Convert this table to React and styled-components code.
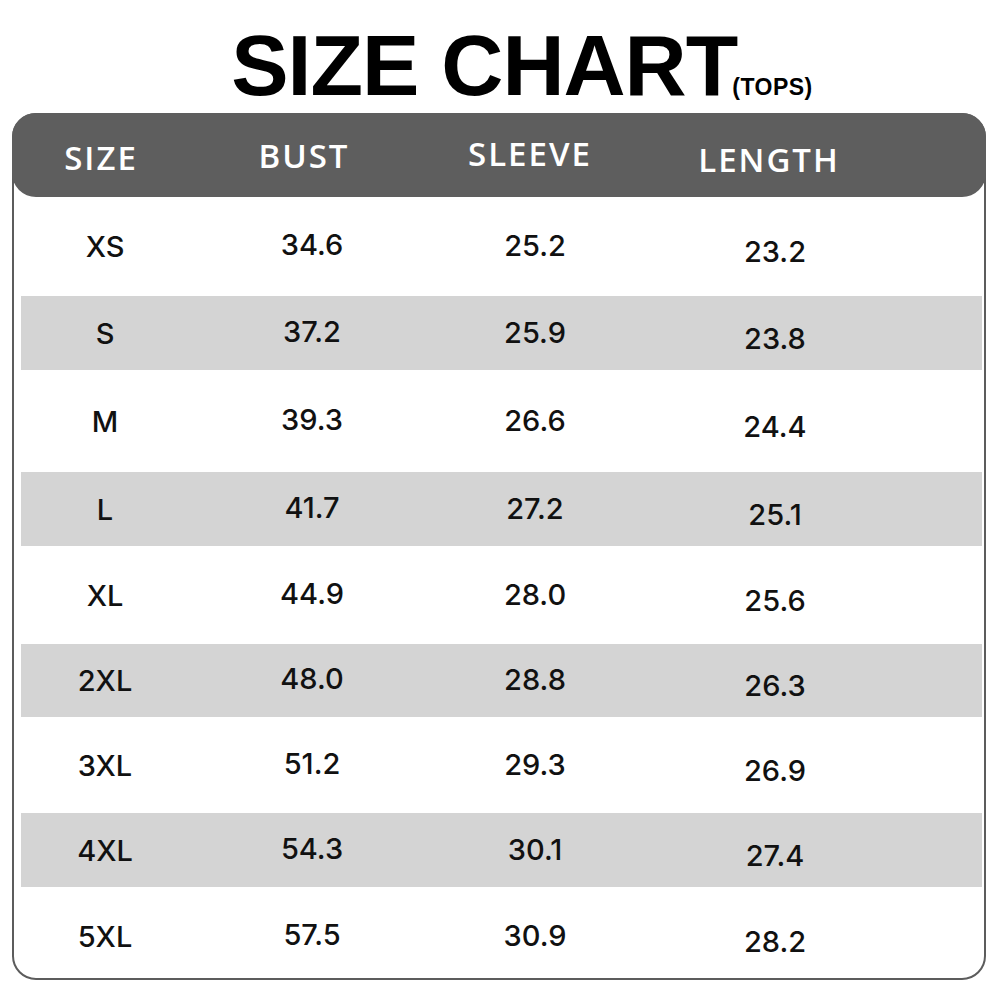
import React from "react";
import styled, { createGlobalStyle } from "styled-components";

const Global = createGlobalStyle`
  html, body { margin: 0; padding: 0; background: #ffffff; }
  body { width: 1000px; height: 1000px; overflow: hidden; }
  * { box-sizing: border-box; }
`;

const Page = styled.div`
  width: 1000px;
  height: 1000px;
  background: #ffffff;
  display: flex;
  flex-direction: column;
`;

const TitleBar = styled.div`
  height: 113px;
  padding: 22px 0 0 44px;
  display: flex;
  justify-content: center;
`;

const Title = styled.h1`
  margin: 0;
  font-family: "Liberation Sans", Arial, sans-serif;
  font-weight: 700;
  font-size: 86px;
  line-height: 86px;
  letter-spacing: -1px;
  color: #000000;
  white-space: nowrap;
`;

const Sub = styled.span`
  font-size: 23px;
  line-height: 1;
  letter-spacing: 0.5px;
  margin-left: -5px;
`;

const Table = styled.div`
  margin: 0 14px 0 12px;
  height: 867px;
  border: 2px solid #5c5c5c;
  border-radius: 24px;
  display: flex;
  flex-direction: column;
`;

const Header = styled.div`
  margin: -2px -2px 0 -2px;
  height: 84px;
  flex: none;
  background: #5e5e5e;
  border-radius: 24px;
  display: grid;
  grid-template-columns: 176px 230px 222px 256px 1fr;
  align-items: center;
`;

const HeadCell = styled.div`
  text-align: center;
  font-family: "Open Sans", sans-serif;
  font-weight: 600;
  font-size: 33px;
  letter-spacing: 2px;
  text-indent: 2px;
  color: #ffffff;
  line-height: 1;
  transform: translateY(${(p) => p.$dy || 0}px);
`;

const Body = styled.div`
  flex: 1;
  padding: 0 2px 0 7px;
  display: flex;
  flex-direction: column;
`;

const Row = styled.div`
  flex: ${(p) => (p.$h ? `0 0 ${p.$h}px` : "1")};
  padding-top: ${(p) => (p.$h ? 0 : 8)}px;
  background: ${(p) => (p.$striped ? "#d4d4d4" : "transparent")};
  display: grid;
  grid-template-columns: 168px 246px 200px 280px 1fr;
  align-items: center;
`;

const Cell = styled.div`
  text-align: center;
  font-family: Inter, "Liberation Sans", sans-serif;
  font-weight: 500;
  font-size: 29px;
  line-height: 1;
  color: #111111;
  transform: translateY(${(p) => p.$dy || 0}px);
`;

const rows = [
  { h: 99, v: ["XS", "34.6", "25.2", "23.2"] },
  { h: 74, v: ["S", "37.2", "25.9", "23.8"] },
  { h: 102, v: ["M", "39.3", "26.6", "24.4"] },
  { h: 74, v: ["L", "41.7", "27.2", "25.1"] },
  { h: 98, v: ["XL", "44.9", "28.0", "25.6"] },
  { h: 73, v: ["2XL", "48.0", "28.8", "26.3"] },
  { h: 96, v: ["3XL", "51.2", "29.3", "26.9"] },
  { h: 74, v: ["4XL", "54.3", "30.1", "27.4"] },
  { h: 0, v: ["5XL", "57.5", "30.9", "28.2"] },
];

const colDy = [0, -2, -1, 5];

export default function App() {
  return (
    <Page>
      <Global />
      <TitleBar>
        <Title>
          SIZE CHART<Sub>(TOPS)</Sub>
        </Title>
      </TitleBar>
      <Table>
        <Header>
          <HeadCell $dy={2}>SIZE</HeadCell>
          <HeadCell $dy={0}>BUST</HeadCell>
          <HeadCell $dy={-2}>SLEEVE</HeadCell>
          <HeadCell $dy={4}>LENGTH</HeadCell>
        </Header>
        <Body>
          {rows.map((r, i) => (
            <Row key={r.v[0]} $h={r.h} $striped={i % 2 === 1}>
              {r.v.map((v, j) => (
                <Cell key={j} $dy={colDy[j]}>
                  {v}
                </Cell>
              ))}
            </Row>
          ))}
        </Body>
      </Table>
    </Page>
  );
}
